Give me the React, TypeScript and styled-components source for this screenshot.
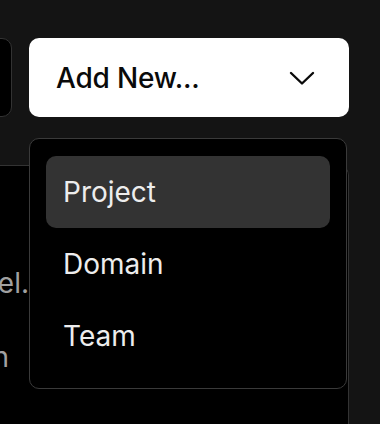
import React from 'react';
import styled, {createGlobalStyle} from "styled-components";

const GlobalStyle = createGlobalStyle`
  html, body {
    margin: 0;
    padding: 0;
    background: #141414;
    width: 380px;
    height: 424px;
    overflow: hidden;
    font-family: Inter, "Noto Sans", sans-serif;
  }
`

const Page = styled.div`
  position: relative;
  width: 380px;
  height: 424px;
  padding-top: 38px;
  box-sizing: border-box;
`

const TopRow = styled.div`
  display: flex;
  gap: 17px;
  margin-left: -100px;
`

const GhostButton = styled.div`
  width: 112px;
  height: 79px;
  box-sizing: border-box;
  background: #000;
  border: 1px solid #333;
  border-radius: 10px;
`

const AddButton = styled.button`
  width: 320px;
  height: 79px;
  box-sizing: border-box;
  background: #fff;
  border: none;
  border-radius: 10px;
  display: flex;
  align-items: center;
  justify-content: space-between;
  padding: 0 34px 0 27px;
  font-family: Inter, "Noto Sans", sans-serif;
  font-size: 28px;
  font-weight: 500;
  color: #0a0a0a;
  letter-spacing: -0.2px;
`

const Panel = styled.div`
  margin-top: 48px;
  margin-left: -40px;
  width: 389px;
  height: 260px;
  box-sizing: border-box;
  background: #000;
  border-top: 1px solid #333;
  border-right: 1px solid #333;
  border-top-right-radius: 10px;
  padding-top: 100px;
  display: flex;
  flex-direction: column;
  gap: 40px;
`

const FadedLine = styled.div<{ $end: number }>`
  width: ${p => p.$end + 40}px;
  display: flex;
  justify-content: flex-end;
  white-space: nowrap;
  font-size: 28px;
  line-height: 34px;
  color: #a1a1a1;
`

const Menu = styled.div`
  position: absolute;
  top: 138px;
  left: 29px;
  width: 318px;
  box-sizing: border-box;
  background: #000;
  border: 1px solid #3a3a3a;
  border-radius: 10px;
  padding: 17px 16px 16px;
  display: flex;
  flex-direction: column;
`

const MenuItem = styled.div<{ $active?: boolean }>`
  height: 72px;
  display: flex;
  align-items: center;
  padding: 0 17px;
  border-radius: 10px;
  background: ${p => p.$active ? '#333' : 'transparent'};
  color: #ededed;
  font-size: 28px;
  font-weight: 400;
`

const Chevron = () => (
    <svg width="26" height="16" viewBox="0 0 26 16" fill="none">
        <polyline points="2,3 13,13.5 24,3" stroke="#0a0a0a" strokeWidth="2.4"
                  strokeLinecap="round" strokeLinejoin="round"/>
    </svg>
)

const App: React.FC = () => {
    const items = ['Project', 'Domain', 'Team']

    return (
        <Page>
            <GlobalStyle/>
            <TopRow>
                <GhostButton/>
                <AddButton>
                    <span>Add New...</span>
                    <Chevron/>
                </AddButton>
            </TopRow>
            <Panel>
                <FadedLine $end={29}>Deploy a new model.</FadedLine>
                <FadedLine $end={9}>Create a domain</FadedLine>
            </Panel>
            <Menu>
                {items.map((item, i) => (
                    <MenuItem key={item} $active={i === 0}>{item}</MenuItem>
                ))}
            </Menu>
        </Page>
    );
};

export default App;
